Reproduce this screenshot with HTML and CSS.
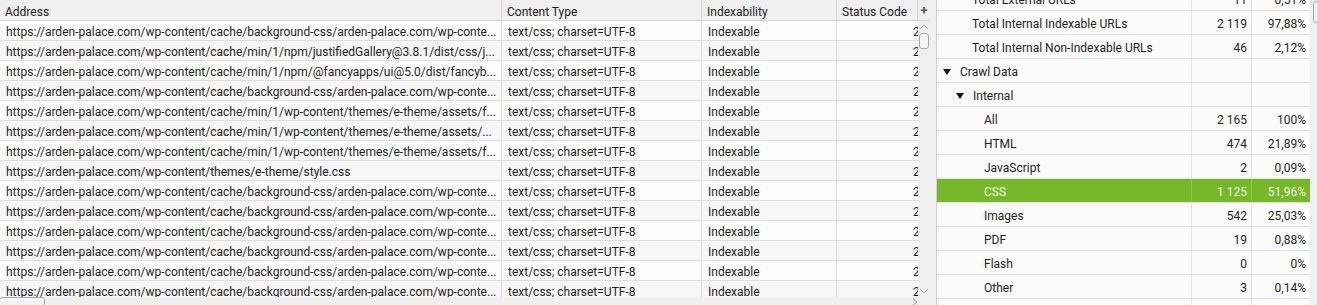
FILE: index.html
```html
<!DOCTYPE html>
<html>
  <head>
    <meta charset="utf-8">
    <title>Crawl overview</title>
    <link rel="stylesheet" href="styles.css">
  </head>
  <body>
    <div class="app">
      <div class="left">
        <div class="head">
          <div class="hc c-addr">Address</div>
          <div class="hc c-type">Content Type</div>
          <div class="hc c-idx">Indexability</div>
          <div class="hc c-code">Status Code</div>
          <div class="hc c-plus">+</div>
        </div>
        <div class="body">
          <div class="rows">
            <div class="row"><div class="c c-addr">https://arden-palace.com/wp-content/cache/background-css/arden-palace.com/wp-conte...</div><div class="c c-type">text/css; charset=UTF-8</div><div class="c c-idx">Indexable</div><div class="c c-code">200</div></div>
            <div class="row"><div class="c c-addr">https://arden-palace.com/wp-content/cache/min/1/npm/justifiedGallery@3.8.1/dist/css/j...</div><div class="c c-type">text/css; charset=UTF-8</div><div class="c c-idx">Indexable</div><div class="c c-code">200</div></div>
            <div class="row"><div class="c c-addr">https://arden-palace.com/wp-content/cache/min/1/npm/@fancyapps/ui@5.0/dist/fancyb...</div><div class="c c-type">text/css; charset=UTF-8</div><div class="c c-idx">Indexable</div><div class="c c-code">200</div></div>
            <div class="row"><div class="c c-addr">https://arden-palace.com/wp-content/cache/background-css/arden-palace.com/wp-conte...</div><div class="c c-type">text/css; charset=UTF-8</div><div class="c c-idx">Indexable</div><div class="c c-code">200</div></div>
            <div class="row"><div class="c c-addr">https://arden-palace.com/wp-content/cache/min/1/wp-content/themes/e-theme/assets/f...</div><div class="c c-type">text/css; charset=UTF-8</div><div class="c c-idx">Indexable</div><div class="c c-code">200</div></div>
            <div class="row"><div class="c c-addr">https://arden-palace.com/wp-content/cache/min/1/wp-content/themes/e-theme/assets/...</div><div class="c c-type">text/css; charset=UTF-8</div><div class="c c-idx">Indexable</div><div class="c c-code">200</div></div>
            <div class="row"><div class="c c-addr">https://arden-palace.com/wp-content/cache/min/1/wp-content/themes/e-theme/assets/f...</div><div class="c c-type">text/css; charset=UTF-8</div><div class="c c-idx">Indexable</div><div class="c c-code">200</div></div>
            <div class="row"><div class="c c-addr">https://arden-palace.com/wp-content/themes/e-theme/style.css</div><div class="c c-type">text/css; charset=UTF-8</div><div class="c c-idx">Indexable</div><div class="c c-code">200</div></div>
            <div class="row"><div class="c c-addr">https://arden-palace.com/wp-content/cache/background-css/arden-palace.com/wp-conte...</div><div class="c c-type">text/css; charset=UTF-8</div><div class="c c-idx">Indexable</div><div class="c c-code">200</div></div>
            <div class="row"><div class="c c-addr">https://arden-palace.com/wp-content/cache/background-css/arden-palace.com/wp-conte...</div><div class="c c-type">text/css; charset=UTF-8</div><div class="c c-idx">Indexable</div><div class="c c-code">200</div></div>
            <div class="row"><div class="c c-addr">https://arden-palace.com/wp-content/cache/background-css/arden-palace.com/wp-conte...</div><div class="c c-type">text/css; charset=UTF-8</div><div class="c c-idx">Indexable</div><div class="c c-code">200</div></div>
            <div class="row"><div class="c c-addr">https://arden-palace.com/wp-content/cache/background-css/arden-palace.com/wp-conte...</div><div class="c c-type">text/css; charset=UTF-8</div><div class="c c-idx">Indexable</div><div class="c c-code">200</div></div>
            <div class="row"><div class="c c-addr">https://arden-palace.com/wp-content/cache/background-css/arden-palace.com/wp-conte...</div><div class="c c-type">text/css; charset=UTF-8</div><div class="c c-idx">Indexable</div><div class="c c-code">200</div></div>
            <div class="row"><div class="c c-addr">https://arden-palace.com/wp-content/cache/background-css/arden-palace.com/wp-conte...</div><div class="c c-type">text/css; charset=UTF-8</div><div class="c c-idx">Indexable</div><div class="c c-code">200</div></div>
          </div>
          <div class="vscroll">
            <svg class="arr" width="10" height="6" viewBox="0 0 10 6"><path d="M1 5 L5 1 L9 5" fill="none" stroke="#a0a0a0" stroke-width="1"/></svg>
            <div class="vthumb"></div>
            <div class="vfill"></div>
            <svg class="arr" width="10" height="6" viewBox="0 0 10 6"><path d="M1 1 L5 5 L9 1" fill="none" stroke="#a0a0a0" stroke-width="1"/></svg>
          </div>
        </div>
        <div class="hscroll">
          <div class="hthumb"></div>
          <svg class="harr" width="6" height="8" viewBox="0 0 6 8"><path d="M1 1 L5 4 L1 7" fill="none" stroke="#a0a0a0" stroke-width="1"/></svg>
        </div>
      </div>
      <div class="splitter"></div>
      <div class="right">
        <div class="overview">
          <div class="orow"><div class="o-lbl l2">Total External URLs</div><div class="o-num">11</div><div class="o-pct">0,51%</div></div>
          <div class="orow"><div class="o-lbl l2">Total Internal Indexable URLs</div><div class="o-num">2 119</div><div class="o-pct">97,88%</div></div>
          <div class="orow"><div class="o-lbl l2">Total Internal Non-Indexable URLs</div><div class="o-num">46</div><div class="o-pct">2,12%</div></div>
          <div class="orow"><div class="o-lbl l1"><svg class="tri" width="8" height="6" viewBox="0 0 8 6"><polygon points="0,0 8,0 4,6" fill="#111"/></svg>Crawl Data</div><div class="o-num"></div><div class="o-pct"></div></div>
          <div class="orow"><div class="o-lbl l2 tr"><svg class="tri" width="8" height="6" viewBox="0 0 8 6"><polygon points="0,0 8,0 4,6" fill="#111"/></svg>Internal</div><div class="o-num"></div><div class="o-pct"></div></div>
          <div class="orow"><div class="o-lbl l3">All</div><div class="o-num">2 165</div><div class="o-pct">100%</div></div>
          <div class="orow"><div class="o-lbl l3">HTML</div><div class="o-num">474</div><div class="o-pct">21,89%</div></div>
          <div class="orow"><div class="o-lbl l3">JavaScript</div><div class="o-num">2</div><div class="o-pct">0,09%</div></div>
          <div class="orow sel"><div class="o-lbl l3">CSS</div><div class="o-num">1 125</div><div class="o-pct">51,96%</div></div>
          <div class="orow"><div class="o-lbl l3">Images</div><div class="o-num">542</div><div class="o-pct">25,03%</div></div>
          <div class="orow"><div class="o-lbl l3">PDF</div><div class="o-num">19</div><div class="o-pct">0,88%</div></div>
          <div class="orow"><div class="o-lbl l3">Flash</div><div class="o-num">0</div><div class="o-pct">0%</div></div>
          <div class="orow"><div class="o-lbl l3">Other</div><div class="o-num">3</div><div class="o-pct">0,14%</div></div>
          <div class="orow"><div class="o-lbl"></div><div class="o-num"></div><div class="o-pct"></div></div>
        </div>
        <div class="rscroll"><div class="rthumb"></div></div>
      </div>
    </div>
  </body>
</html>
```

FILE: styles.css
```css
html, body {
  margin: 0;
  background: #fff;
}

body {
  color: #1e1e1e;
  font: 400 12px/1 Roboto, "Liberation Sans", sans-serif;
  width: 1317px;
  height: 305px;
  overflow: hidden;
}

.app {
  display: flex;
  height: 305px;
}

/* left table */

.left {
  width: 930px;
  display: flex;
  flex-direction: column;
  overflow: hidden;
}

.head {
  display: flex;
  height: 20px;
  background: #f0f0f0;
  border-bottom: 1px solid #d4d4d4;
  flex-shrink: 0;
}

.hc {
  display: flex;
  align-items: center;
  padding: 3px 0 0 5px;
  border-right: 1px solid #d4d4d4;
  box-sizing: border-box;
  color: #222;
}

.c-addr { width: 502px; }
.c-type { width: 200px; }
.c-idx  { width: 135px; }
.c-code { width: 81px; }

.hc.c-plus {
  width: 12px;
  padding: 0;
  justify-content: center;
  font-weight: 700;
  font-size: 13px;
  color: #555;
  border-right: 0;
}

.body {
  display: flex;
  flex: 1;
  min-height: 0;
}

.rows {
  width: 918px;
  overflow: hidden;
}

.row {
  display: flex;
  height: 19px;
  border-bottom: 1px solid #dedede;
  background: #fcfcfc;
}

.row:nth-child(even) {
  background: #f6f6f6;
}

.c {
  display: flex;
  align-items: center;
  padding: 2px 0 0 6px;
  border-right: 1px solid #dedede;
  box-sizing: border-box;
  white-space: nowrap;
  overflow: hidden;
}

.c.c-code {
  border-right: 0;
  padding-left: 76px;
}

.vscroll {
  width: 12px;
  background: #f0f0f0;
  display: flex;
  flex-direction: column;
  align-items: center;
}

.arr {
  margin: 3px 0;
  flex-shrink: 0;
}

.vthumb {
  width: 8px;
  height: 14px;
  border: 1px solid #a8a8a8;
  border-radius: 3px;
  background: #f4f4f4;
  flex-shrink: 0;
}

.vfill {
  flex: 1;
}

.hscroll {
  height: 8px;
  background: #f0f0f0;
  display: flex;
  align-items: flex-start;
  justify-content: space-between;
  flex-shrink: 0;
}

.hthumb {
  width: 44px;
  height: 10px;
  border: 1px solid #a8a8a8;
  border-radius: 3px;
  background: #f4f4f4;
  margin-left: -1px;
}

.harr {
  margin: 1px 12px 0 0;
}

.splitter {
  width: 6px;
  background: #f0f0f0;
  border-right: 1px solid #d0d0d0;
}

/* right overview */

.right {
  flex: 1;
  display: flex;
  overflow: hidden;
}

.overview {
  flex: 1;
  margin-top: -13px;
}

.orow {
  display: flex;
  height: 23px;
  border-bottom: 1px solid #e2e2e2;
  background: #fbfbfb;
}

.orow > div {
  display: flex;
  align-items: center;
  padding-top: 2px;
  box-sizing: border-box;
  white-space: nowrap;
}

.o-lbl {
  width: 255px;
  border-right: 1px solid #e2e2e2;
}

.o-num {
  width: 60px;
  justify-content: flex-end;
  padding-right: 4px;
  border-right: 1px solid #e2e2e2;
}

.o-pct {
  flex: 1;
  justify-content: flex-end;
  padding-right: 4px;
}

.l1 { padding-left: 6px; }
.l2 { padding-left: 35px; }
.l2.tr { padding-left: 19px; }
.l3 { padding-left: 47px; }

.tri {
  margin-right: 9px;
}

.orow.sel {
  background: #76b82a;
  color: #eef7e4;
}

.orow.sel > div {
  border-right-color: #8cc64a;
}

.rscroll {
  width: 7px;
  background: #f0f0f0;
}

.rthumb {
  width: 8px;
  height: 20px;
  margin: 1px 0 0 3px;
  border: 1px solid #a8a8a8;
  border-radius: 3px;
  background: #f4f4f4;
}
```
